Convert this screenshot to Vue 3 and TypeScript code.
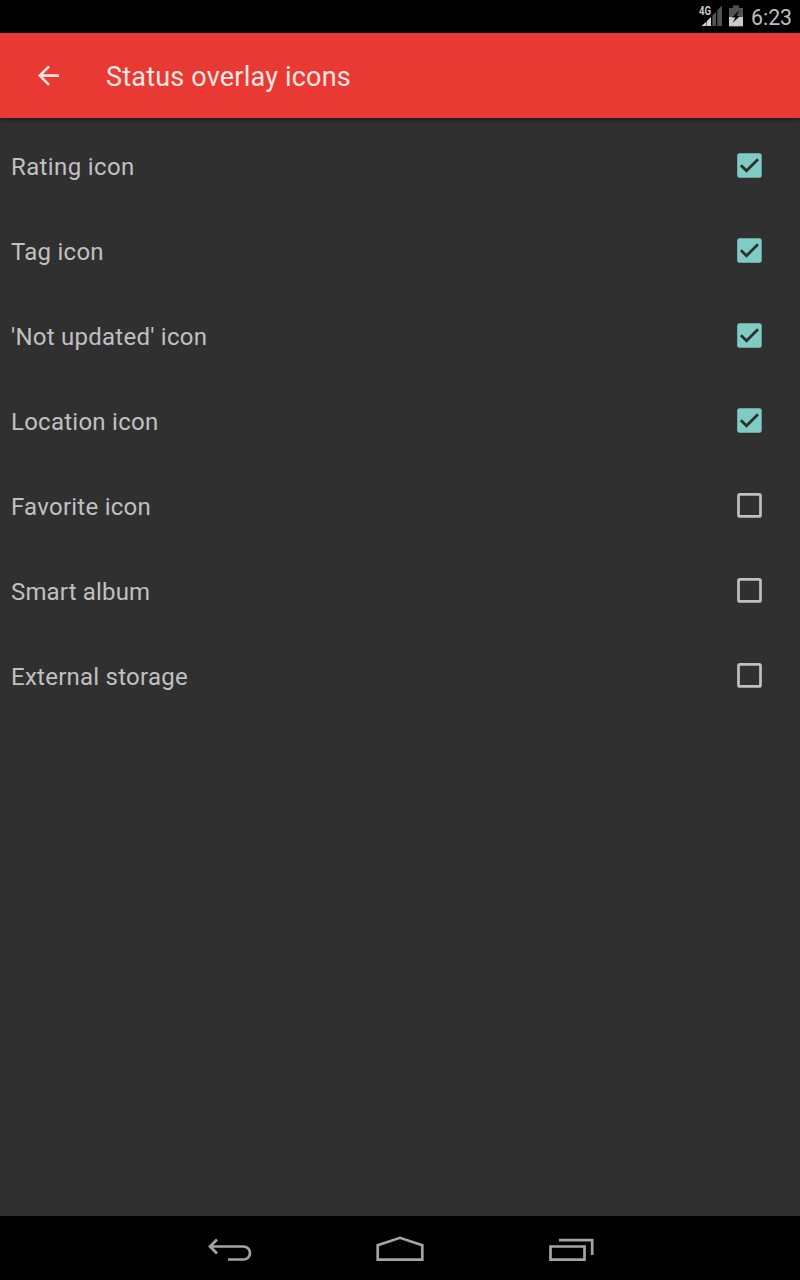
<script setup lang="ts">
import { ref } from 'vue'

interface Option {
  label: string
  key: string
  checked: boolean
}

const options = ref<Option[]>([
  { key: 'rating', label: 'Rating icon', checked: true },
  { key: 'tag', label: 'Tag icon', checked: true },
  { key: 'not-updated', label: "'Not updated' icon", checked: true },
  { key: 'location', label: 'Location icon', checked: true },
  { key: 'favorite', label: 'Favorite icon', checked: false },
  { key: 'album', label: 'Smart album', checked: false },
  { key: 'storage', label: 'External storage', checked: false },
])
</script>

<template>
  <div class="screen">
    <div class="status-bar">
      <svg class="signal" width="24" height="24" viewBox="0 0 24 24">
        <path d="M2.5 22 L7.5 17.5 V22 Z" fill="#d0d0d0" />
        <path d="M8 17 L12 13 V22 H8 Z" fill="#d0d0d0" />
        <path d="M13.3 11.5 L17 8 V22 H13.3 Z" fill="#505350" />
        <path d="M18.3 6.5 L23 1.5 V22 H18.3 Z" fill="#505350" />
        <text transform="scale(1 1.2)" x="0" y="9.3" textLength="12" lengthAdjust="spacingAndGlyphs">4G</text>
      </svg>
      <svg class="battery" width="14" height="22" viewBox="0 0 14 22">
        <path d="M0 3 H4 V0.5 H10 V3 H14 V12 H0 Z" fill="#505350" />
        <path d="M0 12 H14 V21.3 H0 Z" fill="#cbcbcb" />
        <path d="M10.5 5 L3 12.5 H6.5 L3.5 18 L11 11 H7.7 Z" fill="#080808" />
      </svg>
      <span class="clock">6:23</span>
    </div>
    <header class="toolbar">
      <svg class="back" width="24" height="24" viewBox="0 0 24 24">
        <path d="M23 11.6 H4 M13 2.3 L3.8 11.6 L13 20.9" fill="none" stroke="#ffe4e2" stroke-width="2.6" />
      </svg>
      <h1>Status overlay icons</h1>
    </header>
    <main class="list">
      <div v-for="o in options" :key="o.key" class="row" @click="o.checked = !o.checked">
        <span class="label" :class="o.key">{{ o.label }}</span>
        <svg width="26" height="26" viewBox="0 0 26 26">
          <template v-if="o.checked">
            <rect x="1.2" y="0.2" width="24.5" height="24.5" rx="2.5" fill="#80cbc4" />
            <path d="M4.9 12.2 L10.5 17.7 L22 6.2" fill="none" stroke="#303030" stroke-width="2.8" />
          </template>
          <rect v-else x="2.5" y="1.4" width="22" height="22" rx="1.5" fill="none" stroke="#c0c0c0" stroke-width="2.7" />
        </svg>
      </div>
    </main>
    <nav class="nav-bar">
      <svg width="60" height="64" viewBox="200 1216 60 64">
        <path d="M217 1239.5 L210 1246.5 L217 1253.5 M210 1246.5 H243.5 A6.5 6.5 0 0 1 243.5 1259.5 H228" />
      </svg>
      <svg width="60" height="64" viewBox="370 1216 60 64">
        <path d="M377.7 1259.7 V1245.2 L400 1237.8 L422.3 1245.2 V1259.7 Z" />
      </svg>
      <svg width="60" height="64" viewBox="540 1216 60 64">
        <path d="M550.5 1246.5 H584.5 V1259.7 H550.5 Z M559 1240.2 H592.2 V1255" />
      </svg>
    </nav>
  </div>
</template>

<style>
body {
  margin: 0;
  background: #303030;
}
</style>

<style scoped>
.screen {
  width: 800px;
  height: 1280px;
  display: flex;
  flex-direction: column;
  background: #303030;
  font-family: Roboto, "Noto Sans", sans-serif;
  overflow: hidden;
}
.status-bar {
  height: 33px;
  flex: none;
  display: flex;
  justify-content: flex-end;
  align-items: flex-start;
  padding-right: 8px;
  background: #000;
}
.signal {
  margin: 4px 6px 0 0;
}
.signal text {
  font-size: 11px;
  font-weight: 700;
  fill: #c8c8c8;
}
.battery {
  margin-top: 5px;
}
.clock {
  margin: 5px 0 0 8px;
  width: 41px;
  font-size: 21.3px;
  line-height: 25px;
  color: #bebebe;
  white-space: nowrap;
}
.toolbar {
  height: 85px;
  flex: none;
  display: flex;
  align-items: center;
  padding-left: 36px;
  background: #e83a33;
  box-shadow: 0 1px 5px rgba(0, 0, 0, 0.6);
}
.back {
  margin-top: 1px;
}
h1 {
  margin: 2px 0 0 46px;
  font-size: 27px;
  font-weight: 400;
  line-height: 32px;
  letter-spacing: 0.2px;
  color: #fde5e4;
}
.list {
  flex: 1;
  padding-top: 5px;
}
.row {
  height: 85px;
  display: flex;
  align-items: center;
  justify-content: space-between;
  padding: 0 38px 0 11px;
}
.label {
  font-size: 24px;
  line-height: 30px;
  margin-top: 2px;
  letter-spacing: 0.25px;
  color: #c0c0c0;
}
.label.rating {
  letter-spacing: 0.38px;
}
.label.album {
  letter-spacing: 0.16px;
}
.nav-bar {
  height: 64px;
  flex: none;
  display: flex;
  justify-content: center;
  gap: 110px;
  background: #000;
}
.nav-bar path {
  fill: none;
  stroke: #a4a4a4;
  stroke-width: 2.7;
}
</style>
